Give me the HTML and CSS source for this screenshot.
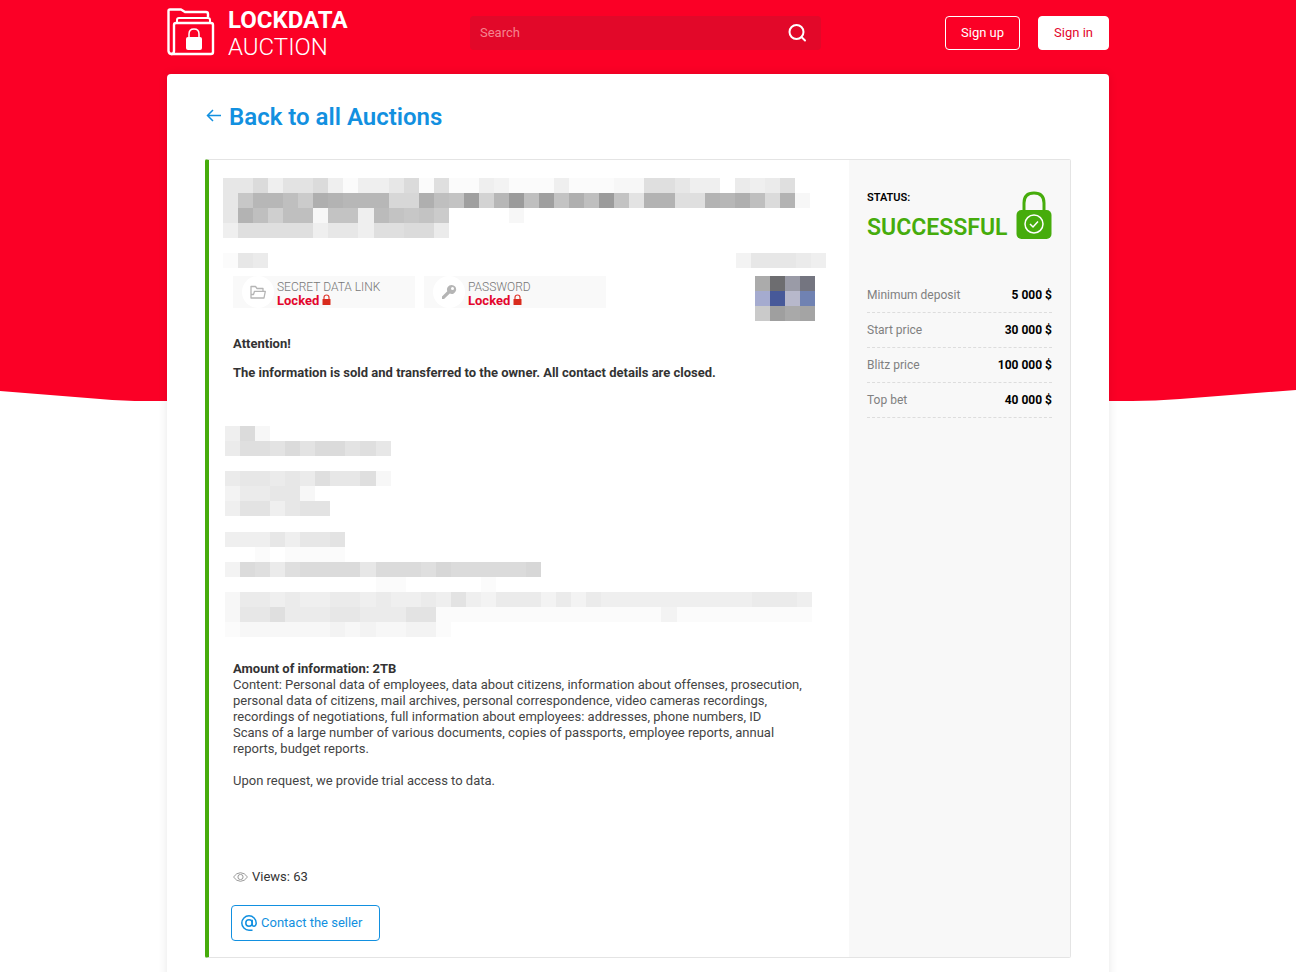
FILE: index.html
```html
<!DOCTYPE html>
<html lang="en">
<head>
  <meta charset="UTF-8" />
  <meta name="viewport" content="width=device-width, initial-scale=1.0" />
  <title>Lockdata Auction</title>
  <link rel="stylesheet" href="styles.css">
</head>
<body>
  <!-- Red page background with the curved bottom edge -->
  <svg class="page-bg" viewBox="0 0 1296 401" preserveAspectRatio="none" aria-hidden="true">
    <path fill="#fb0026" d="M0 0H1296V390L1180 399Q1155 401 1132 401H145Q125 401 100 399L0 391Z"/>
  </svg>

  <div class="container">
    <header class="header">
      <a class="logo" href="#">
        <svg class="logo-icon" viewBox="0 0 48 48" fill="none" stroke="#fff" stroke-width="2.400" stroke-linejoin="round" aria-hidden="true">
          <path d="M7 43Q7 46 4.500 46T1.500 43V3Q1.500 1.500 3 1.500H14L18 4H39Q41 4 41 6V9"/>
          <path d="M7 43V17Q7 15 9 15H44Q46 15 46 17V44Q46 46 44 46H4"/>
          <path d="M10 14V12Q10 10 12 10H41Q43 10 43 12V14" stroke-width="2"/>
          <path d="M22 31V26Q22 21 27 21T32 26V31" stroke-width="1.500"/>
          <rect x="19" y="29" width="16" height="13" rx="2" fill="#fff" stroke="none"/>
        </svg>
        <span class="logo-text"><b>LOCKDATA</b><span>AUCTION</span></span>
      </a>

      <form class="search">
        <input type="text" placeholder="Search" aria-label="Search">
        <button type="button" aria-label="Find">
          <svg width="20" height="20" viewBox="0 0 20 20" fill="none" stroke="#fff" stroke-width="2" stroke-linecap="round"><circle cx="9.500" cy="9" r="7"/><path d="M14.500 14L18 17.500"/></svg>
        </button>
      </form>

      <div class="actions">
        <button class="btn btn-outline" type="button">Sign up</button>
        <button class="btn btn-white" type="button">Sign in</button>
      </div>
    </header>

    <main class="content">
      <h1 class="back">
        <a href="#">
          <svg width="16" height="16" viewBox="0 0 16 16" fill="none" stroke="#1290e0" stroke-width="1.5" aria-hidden="true"><path d="M8 1L2.500 6.500L8 12M2.500 6.500H16"/></svg>
          Back to all Auctions
        </a>
      </h1>

      <article class="lot">
        <div class="lot-main">
          <div class="mosaic" data-mosaic="title"></div>
          <div class="lot-dates">
            <div class="mosaic" data-mosaic="start"></div>
            <div class="mosaic" data-mosaic="end"></div>
          </div>

          <div class="lot-meta">
            <div class="secret">
              <span class="secret-icon">
                <svg width="16" height="14" viewBox="0 0 16 14" fill="none" stroke="#b5b5b5" stroke-width="1.3" stroke-linejoin="round" aria-hidden="true"><path d="M13 6V3.500H7L5.500 1.500H1V13H14L15.300 6.300H4.500L3.500 9.500H1"/></svg>
              </span>
              <div class="secret-text">
                <span>SECRET DATA LINK</span>
                <strong>Locked <svg width="9" height="12" viewBox="0 0 9 12" aria-hidden="true"><path d="M2 6V3.500Q2 1 4.500 1T7 3.500V6" fill="none" stroke="#e03c32" stroke-width="1.200"/><rect x="0.500" y="5" width="8" height="6" rx="0.500" fill="#d92c1e"/></svg></strong>
              </div>
            </div>
            <div class="secret">
              <span class="secret-icon">
                <svg width="16" height="16" viewBox="0 0 16 16" aria-hidden="true"><path fill="#b5b5b5" fill-rule="evenodd" d="M10.500 1A4.500 4.500 0 0 0 6.300 7.200L1 12.500V15H3L8.800 9.600A4.500 4.500 0 1 0 10.500 1ZM11.500 3A1.500 1.500 0 1 1 11.500 6A1.500 1.500 0 1 1 11.500 3Z"/></svg>
              </span>
              <div class="secret-text">
                <span>PASSWORD</span>
                <strong>Locked <svg width="9" height="12" viewBox="0 0 9 12" aria-hidden="true"><path d="M2 6V3.500Q2 1 4.500 1T7 3.500V6" fill="none" stroke="#e03c32" stroke-width="1.200"/><rect x="0.500" y="5" width="8" height="6" rx="0.500" fill="#d92c1e"/></svg></strong>
              </div>
            </div>
            <svg class="lot-logo" viewBox="0 0 4 3" shape-rendering="crispEdges" aria-hidden="true">
              <path fill="#ababab" d="M0 0h1v1h-1z"/><path fill="#6d6d70" d="M1 0h1v1h-1z"/><path fill="#9a9ba7" d="M2 0h1v1h-1z"/><path fill="#747580" d="M3 0h1v1h-1z"/>
              <path fill="#a5abcf" d="M0 1h1v1h-1z"/><path fill="#475999" d="M1 1h1v1h-1z"/><path fill="#b7b8cb" d="M2 1h1v1h-1z"/><path fill="#7082b2" d="M3 1h1v1h-1z"/>
              <path fill="#cacaca" d="M0 2h1v1h-1z"/><path fill="#9f9f9f" d="M1 2h1v1h-1z"/><path fill="#a9a9a9" d="M2 2h1v1h-1z"/><path fill="#a4a4a4" d="M3 2h1v1h-1z"/>
            </svg>
          </div>

          <div class="lot-text notice">
            <p><strong>Attention!</strong></p>
            <p><strong>The information is sold and transferred to the owner. All contact details are closed.</strong></p>
          </div>

          <div class="mosaic mosaic-body" data-mosaic="body"></div>

          <div class="lot-text description">
            <p><strong>Amount of information: 2TB</strong><br>
              Content: Personal data of employees, data about citizens, information about offenses, prosecution, personal data of citizens, mail archives, personal correspondence, video cameras recordings, recordings of negotiations, full information about employees: addresses, phone numbers, ID<br>
              Scans of a large number of various documents, copies of passports, employee reports, annual reports, budget reports.</p>
            <p>Upon request, we provide trial access to data.</p>
          </div>

          <div class="views">
            <svg width="15" height="10" viewBox="0 0 15 10" fill="none" stroke="#999" aria-hidden="true"><path d="M0.500 5Q3.500 0.700 7.500 0.700T14.500 5Q11.500 9.300 7.500 9.300T0.500 5Z"/><circle cx="7.500" cy="5" r="2.600"/></svg>
            Views: 63
          </div>

          <a class="contact" href="#">
            <svg width="16" height="16" viewBox="0 0 16 16" fill="none" stroke="#1290e0" stroke-width="1.500" aria-hidden="true"><circle cx="8" cy="8" r="3.200"/><path d="M11.200 4.800V9.200Q11.200 11.200 13 11.200T15.200 8.500V8A7.200 7.200 0 1 0 8 15.200H11.500"/></svg>
            Contact the seller
          </a>
        </div>

        <aside class="lot-side">
          <div class="status">
            <div>
              <span class="status-label">STATUS:</span>
              <span class="status-value">SUCCESSFUL</span>
            </div>
            <svg class="status-icon" width="36" height="48" viewBox="0 0 36 48" fill="none" aria-hidden="true">
              <path d="M8 22V12Q8 2 18 2T28 12V22" stroke="#46ac0c" stroke-width="3"/>
              <rect x="0.500" y="19" width="35" height="29" rx="5" fill="#46ac0c"/>
              <circle cx="18" cy="33" r="9" stroke="#fff" stroke-width="1.500"/>
              <path d="M14 33L17 36L22 30.500" stroke="#fff" stroke-width="1.500"/>
            </svg>
          </div>
          <dl class="prices">
            <div><dt>Minimum deposit</dt><dd>5 000 $</dd></div>
            <div><dt>Start price</dt><dd>30 000 $</dd></div>
            <div><dt>Blitz price</dt><dd>100 000 $</dd></div>
            <div><dt>Top bet</dt><dd>40 000 $</dd></div>
          </dl>
        </aside>
      </article>
    </main>
  </div>

  <script src="script.js"></script>
</body>
</html>
```
FILE: styles.css
```css
* {
  box-sizing: border-box;
}
body {
  font-family: Roboto, "Liberation Sans", sans-serif;
  font-size: 13px;
  line-height: 16px;
  color: #333;
  margin: 0;
  padding: 0 20px 0 0;
  background: #fff;
  position: relative;
}
a {
  text-decoration: none;
}
.page-bg {
  position: absolute;
  top: 0;
  left: 0;
  width: 100%;
  height: 401px;
  z-index: -1;
}
.container {
  max-width: 942px;
  margin: 0 auto;
}
/* Header */
.header {
  display: flex;
  align-items: flex-start;
  height: 74px;
  padding-top: 8px;
}
.logo {
  display: flex;
  gap: 13px;
  flex: 0 0 303px;
  color: #fff;
}
.logo-icon {
  width: 48px;
  height: 48px;
}
.logo-text {
  display: flex;
  flex-direction: column;
  font-size: 24px;
  line-height: 27px;
  font-weight: 300;
  margin-top: -1px;
}
.logo-text b {
  font-weight: 700;
}
.search {
  display: flex;
  flex: 0 1 351px;
  height: 34px;
  margin-top: 8px;
  background: #e20829;
  border-radius: 4px;
}
.search input {
  flex: 1;
  min-width: 0;
  padding: 0 10px;
  border: 0;
  outline: 0;
  background: none;
  color: #fff;
  font: inherit;
}
.search input::placeholder {
  color: #f5848f;
  opacity: 1;
}
.search button {
  width: 48px;
  padding: 0;
  border: 0;
  background: none;
  display: flex;
  align-items: center;
  justify-content: center;
}
.actions {
  display: flex;
  gap: 18px;
  margin: 8px 0 0 auto;
}
.btn {
  height: 34px;
  padding: 0 15px;
  border: 1px solid #fff;
  border-radius: 4px;
  font: inherit;
  cursor: pointer;
}
.btn-outline {
  background: none;
  color: #fff;
}
.btn-white {
  background: #fff;
  color: #e3062c;
}
/* Page card */
.content {
  background: #fff;
  border-radius: 4px;
  padding: 27px 38px 38px;
  box-shadow: 0 0 10px rgba(0, 0, 0, 0.1);
}
.back {
  font-size: 24px;
  line-height: 32px;
  font-weight: 600;
  margin: 0 0 26px;
}
.back a {
  display: flex;
  width: fit-content;
  align-items: center;
  gap: 8px;
  color: #1290e0;
}
/* Lot */
.lot {
  display: flex;
  border: 1px solid #e4e4e4;
  border-left: 4px solid #46ac0c;
  border-radius: 2px;
}
.lot-main {
  flex: 1;
  min-width: 0;
  padding: 18px 23px 16px 14px;
}
.mosaic svg {
  display: block;
}
.lot-dates {
  display: flex;
  justify-content: space-between;
  align-items: flex-end;
}
.mosaic-body {
  margin: 45px 0 24px 2px;
}
.lot-meta {
  display: flex;
  gap: 9px;
  margin: 8px 11px 0 10px;
}
.secret {
  display: flex;
  align-items: center;
  gap: 3px;
  width: 182px;
  height: 32px;
  padding-left: 9px;
  background: #f9f9f9;
}
.secret-icon {
  display: flex;
  align-items: center;
  justify-content: center;
  width: 32px;
  height: 32px;
  border-radius: 50%;
  background: #fff;
}
.secret-text {
  display: flex;
  flex-direction: column;
  line-height: 14px;
  padding-top: 4px;
}
.secret-text span {
  font-size: 12px;
  font-weight: 300;
  color: #777;
}
.secret-text strong {
  display: flex;
  align-items: center;
  gap: 3px;
  font-weight: 700;
  color: #e3062c;
}
.secret-text svg {
  margin-bottom: 3px;
}
.lot-logo {
  width: 60px;
  height: 45px;
  margin-left: auto;
}
.lot-text,
.views {
  padding: 0 10px;
}
.lot-text p {
  margin: 0;
}
.lot-text strong {
  font-weight: 700;
}
.notice {
  margin-top: 15px;
}
.notice p + p {
  margin-top: 13px;
}
.description {
  color: #444;
}
.description strong {
  color: #333;
}
.description p + p {
  margin-top: 16px;
}
.views {
  display: flex;
  align-items: center;
  gap: 4px;
  margin: 80px 0 20px;
}
.contact {
  display: inline-flex;
  align-items: center;
  gap: 4px;
  height: 36px;
  margin-left: 8px;
  padding: 0 17px 0 9px;
  border: 1px solid #1290e0;
  border-radius: 4px;
  color: #1290e0;
}
/* Right column */
.lot-side {
  flex: 0 0 221px;
  padding: 31px 18px;
  background: #f8f8f8;
}
.status {
  display: flex;
  justify-content: space-between;
}
.status-label,
.status-value {
  display: block;
  font-weight: 600;
}
.status-label {
  font-size: 11px;
  line-height: 14px;
  color: #000;
}
.status-value {
  font-size: 23px;
  line-height: 28px;
  margin-top: 9px;
  color: #46ac0c;
}
.status-icon {
  flex: none;
}
.prices {
  margin: 36px 0 0;
  font-size: 12px;
}
.prices div {
  display: flex;
  justify-content: space-between;
  line-height: 34px;
  border-bottom: 1px dashed #ddd;
}
.prices dt {
  color: #808080;
}
.prices dd {
  margin: 0;
  font-weight: 700;
  color: #000;
}
```
FILE: script.js
```js
// Each letter is one grey cell: a is the lightest, z the darkest, a dot is empty
const mosaics = {
  title: [
    "ffidggidaddfiahaadcaaadaaabbhhfdd.edeh",
    "fnrrpmtsrrrjjtpoxkrypxotpyogsshhsrtpisb",
    "fsplppboodqonom....b",
    "dhhhhhdffdhhiie",
  ],
  start: ["afe"],
  end: ["......", "cfffed"],
  body: [
    "dib",
    "ehhgigiighf",
    "",
    "effefehffhb",
    "ceeffb",
    "dggdfgg",
    "",
    "dddfdffg",
    "..a.aaaa",
    "cihehiiiifiiihjiiiiij",
    "..........aa.....a",
    "beededdeededdedgdceeececeddddddddddeeed",
    "bffheeeffeeeggaaaaaaaaaaaaaaacaaaaaaaaa",
    "abbbbbbcbcbbcca",
  ],
};

const cell = 15.05;

function drawMosaic(box) {
  const rows = mosaics[box.dataset.mosaic];
  const cols = Math.max(...rows.map(r => r.length));
  let rects = "";
  rows.forEach((row, y) => {
    [...row].forEach((ch, x) => {
      if (ch === ".") return;
      const v = 255 - (ch.charCodeAt(0) - 96) * 4;
      rects += `<rect x="${x}" y="${y}" width="1" height="1" fill="rgb(${v},${v},${v})"/>`;
    });
  });
  box.innerHTML = `<svg width="${Math.round(cols * cell)}" height="${Math.round(rows.length * cell)}" viewBox="0 0 ${cols} ${rows.length}" preserveAspectRatio="none" shape-rendering="crispEdges" aria-hidden="true">${rects}</svg>`;
}

document.querySelectorAll(".mosaic").forEach(drawMosaic);
```
